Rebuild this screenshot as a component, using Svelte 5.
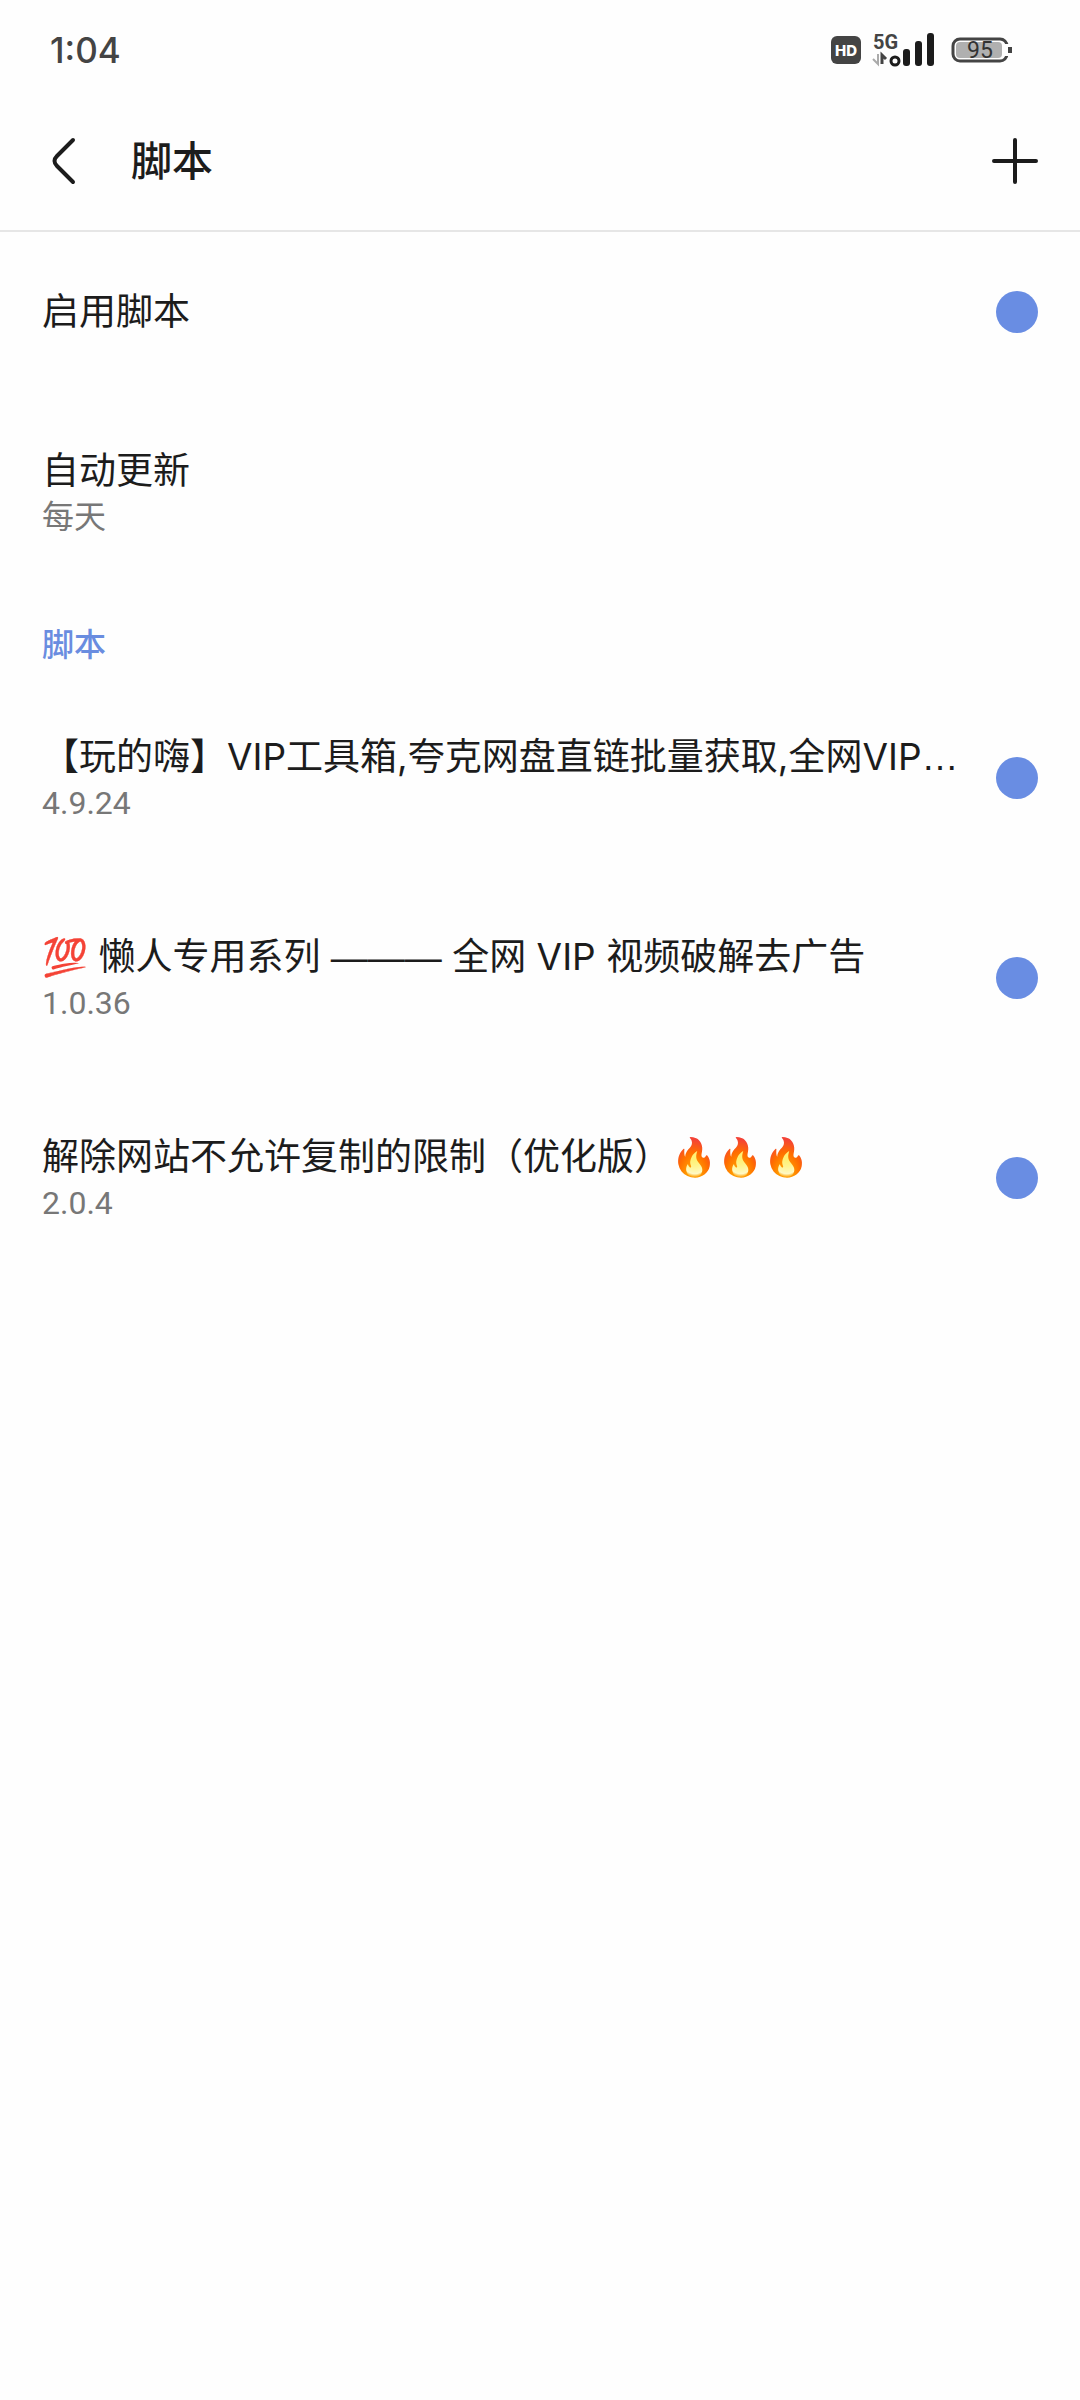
<script>
  let enabled = $state(true);

  let scripts = $state([
    { id: 'toolbox', title: ['【玩的嗨】VIP工具箱,夸克网盘直链批量获取,全网VIP', '…'], version: '4.9.24', on: true },
    { id: 'video', title: ['💯 懒人专用系列 ', '———', ' 全网 VIP 视频破解去广告'], version: '1.0.36', on: true },
    { id: 'copy', title: ['解除网站不允许复制的限制（优化版）🔥🔥🔥'], version: '2.0.4', on: true }
  ]);

  // dashes and dots take a full em
  const isWide = (part) => /^[—…]+$/.test(part);
</script>

<div class="page">
  <div class="status-bar">
    <span class="clock">1:04</span>
    <svg class="status-icons" viewBox="0 -4 184 44" width="184" height="44" aria-hidden="true">
      <rect x="0" y="4" width="30" height="28" rx="6" fill="#444" />
      <text x="15" y="24" class="hd" text-anchor="middle">HD</text>
      <text x="42" y="17" class="net">5G</text>
      <path d="M47 22v10l-5-5" fill="none" stroke="#aaa" stroke-width="2" />
      <path d="M51 32v-9l4 4" fill="none" stroke="#444" stroke-width="3" />
      <circle cx="64" cy="29" r="4" fill="none" stroke="#1c1c1c" stroke-width="3" />
      <rect x="72" y="17" width="7" height="17" rx="3" fill="#1c1c1c" />
      <rect x="84" y="9" width="7" height="25" rx="3" fill="#1c1c1c" />
      <rect x="96" y="1" width="7" height="33" rx="3" fill="#1c1c1c" />
      <rect x="122" y="7" width="54" height="22" rx="7" fill="none" stroke="#444" stroke-width="3" />
      <rect x="125" y="10" width="46" height="16" rx="4" fill="#b0b0b0" />
      <rect x="173" y="12" width="6" height="12" fill="#fff" />
      <rect x="177" y="15" width="4" height="6" fill="#444" />
      <text x="149" y="26" class="level" text-anchor="middle">95</text>
    </svg>
  </div>

  <header class="toolbar">
    <button class="icon-button" aria-label="返回">
      <svg viewBox="0 0 24 48" width="24" height="48">
        <path d="M21 3 L5 19 Q0 24 5 29 L21 45" fill="none" stroke="#1c1c1c" stroke-width="4" stroke-linecap="round" />
      </svg>
    </button>
    <h1>脚本</h1>
    <button class="icon-button" aria-label="添加">
      <svg viewBox="0 0 46 46" width="46" height="46">
        <path d="M23 2v42M2 23h42" stroke="#1c1c1c" stroke-width="4" stroke-linecap="round" />
      </svg>
    </button>
  </header>

  <main>
    <label class="row short">
      <span class="title">启用脚本</span>
      <input type="checkbox" class="toggle" bind:checked={enabled} />
    </label>

    <button class="row">
      <span class="text">
        <span class="title">自动更新</span>
        <span class="summary">每天</span>
      </span>
    </button>

    <h2>脚本</h2>

    {#each scripts as script (script.id)}
      <label class="row">
        <span class="text">
          <span class="title">{#each script.title as part}<span class:wide={isWide(part)}>{part}</span>{/each}</span>
          <span class="summary">{script.version}</span>
        </span>
        <input type="checkbox" class="toggle" bind:checked={script.on} />
      </label>
    {/each}
  </main>
</div>

<style>
  :global(body) {
    margin: 0;
    background: #fefefe;
  }

  .page {
    font-family: Roboto, 'Noto Sans CJK SC', sans-serif;
    color: #1c1c1c;
  }

  button {
    border: 0;
    padding: 0;
    background: none;
    font: inherit;
    color: inherit;
  }

  .status-bar {
    display: flex;
    align-items: center;
    justify-content: space-between;
    box-sizing: border-box;
    height: 92px;
    padding: 8px 65px 0 50px;
  }

  .clock {
    font-family: Inter, sans-serif;
    font-size: 35px;
    font-weight: 500;
    color: #444;
  }

  .hd {
    font: 800 15px Inter, sans-serif;
    fill: #fff;
  }

  .net {
    font: 700 20px Roboto, sans-serif;
    fill: #444;
  }

  .level {
    font: 400 23px Roboto, sans-serif;
    fill: #333;
  }

  .toolbar {
    display: flex;
    align-items: center;
    height: 138px;
    padding: 0 42px 0 52px;
    border-bottom: 2px solid #e6e6e6;
  }

  .icon-button {
    display: flex;
  }

  h1 {
    flex: 1;
    margin: 0;
    padding: 2px 0 0 55px;
    font-size: 41px;
    font-weight: 500;
    line-height: 60px;
  }

  h2 {
    margin: 0;
    padding: 32px 42px 12px;
    font-size: 32px;
    font-weight: 500;
    line-height: 42px;
    color: #6a8de0;
  }

  .row {
    display: flex;
    align-items: center;
    justify-content: space-between;
    gap: 42px;
    box-sizing: border-box;
    width: 100%;
    height: 200px;
    padding: 0 42px;
    text-align: left;
  }

  .row.short {
    height: 160px;
  }

  .text {
    display: flex;
    flex-direction: column;
    min-width: 0;
  }

  .title {
    font-family: Inter, 'Noto Sans CJK SC', sans-serif;
    font-size: 37px;
    line-height: 50px;
    white-space: nowrap;
  }

  .wide {
    font-family: 'Liberation Sans', sans-serif;
    line-height: 1;
  }

  .summary {
    font-size: 32px;
    line-height: 42px;
    color: #777;
  }

  .toggle {
    appearance: none;
    flex: none;
    width: 42px;
    height: 42px;
    margin: 0;
    border-radius: 50%;
    background: #ccc;
  }

  .toggle:checked {
    background: #698de3;
  }
</style>
